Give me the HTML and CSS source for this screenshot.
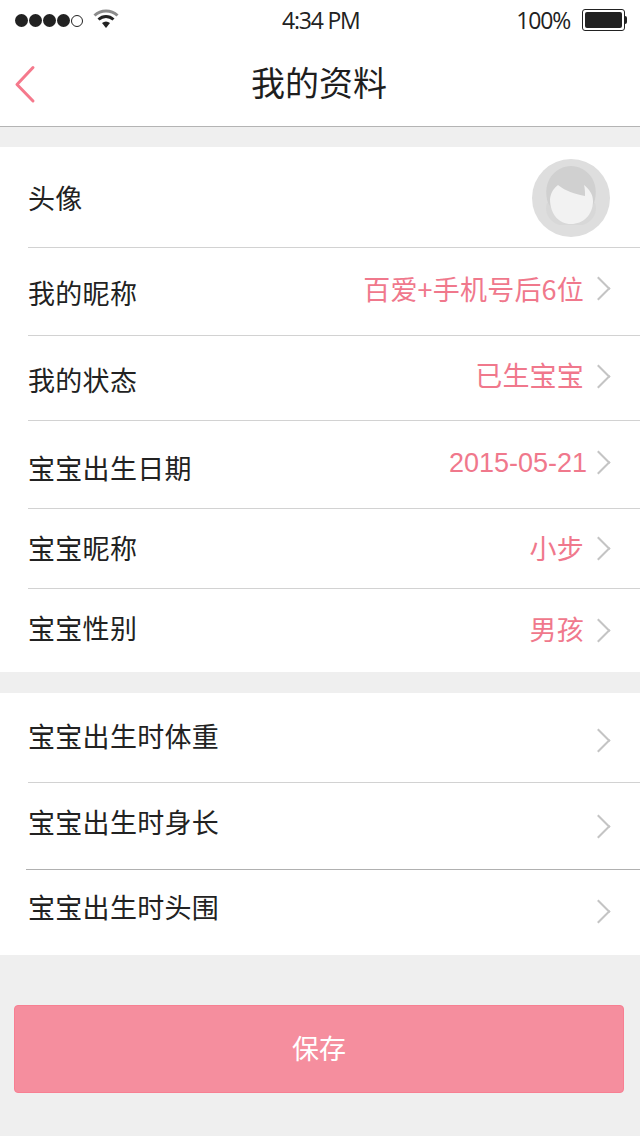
FILE: index.html
```html
<!DOCTYPE html>
<html lang="zh-CN">

<head>
    <meta charset="UTF-8">
    <meta name="viewport" content="width=device-width, initial-scale=1.0">

    <title>我的资料</title>
    <link rel="stylesheet" href="styles.css">
</head>

<body>
    <div class="status-bar">
        <div class="status-left">
            <div class="signal">
                <span class="dot"></span>
                <span class="dot"></span>
                <span class="dot"></span>
                <span class="dot"></span>
                <span class="dot dot-empty"></span>
            </div>
            <svg class="wifi" width="26" height="22" viewBox="0 0 26 22">
                <path d="M1.5 7.5 C8 1.500 18 1.500 24.500 7.500" fill="none" stroke="#8c8c8c" stroke-width="3"/>
                <path d="M5.500 11.500 C10 7.500 16 7.500 20.500 11.500" fill="none" stroke="#222" stroke-width="3"/>
                <path d="M9 15 C11.500 13 14.500 13 17 15 L13 20 Z" fill="#222"/>
            </svg>
        </div>
        <div class="status-time">4:34 PM</div>
        <div class="status-right">
            <span>100%</span>
            <div class="battery"><div class="battery-fill"></div></div>
            <div class="battery-tip"></div>
        </div>
    </div>

    <div class="nav-bar">
        <svg class="back" width="24" height="40" viewBox="0 0 24 40">
            <path d="M20 3.500 L4 20.500 L20 37" fill="none" stroke="#f5798c" stroke-width="3" stroke-linecap="round" stroke-linejoin="round"/>
        </svg>
        <h1 class="nav-title">我的资料</h1>
    </div>

    <div class="group group-first">
        <div class="row row-avatar">
            <span class="label">头像</span>
            <svg class="avatar" width="78" height="78" viewBox="0 0 78 78">
                <circle cx="39" cy="39" r="39" fill="#dedede"/>
                <path d="M15 44 C12 52 16 62 27 66 L51 66 C62 62 66 52 63 44 Z" fill="#d8d8d8"/>
                <path d="M16 44 C9 22 24 7 39 7 C54 7 69 22 62 44 L58 50 L20 50 Z" fill="#d0d0d0"/>
                <path d="M18 40 C19 33 22 29 26 26 C33 32 43 35 53 37 C53 33 53 30 52 26 C57 30 61 35 61 42 C61 56 51 65 39 65 C27 65 18 55 18 40 Z" fill="#f2f2f2"/>
            </svg>
        </div>
        <div class="row row-nick">
            <span class="label">我的昵称</span>
            <span class="value">百爱+手机号后6位</span>
            <span class="arrow"></span>
        </div>
        <div class="row row-state">
            <span class="label">我的状态</span>
            <span class="value">已生宝宝</span>
            <span class="arrow"></span>
        </div>
        <div class="row row-date">
            <span class="label">宝宝出生日期</span>
            <span class="value value-date">2015-05-21</span>
            <span class="arrow"></span>
        </div>
        <div class="row row-baby">
            <span class="label">宝宝昵称</span>
            <span class="value">小步</span>
            <span class="arrow"></span>
        </div>
        <div class="row row-sex">
            <span class="label">宝宝性别</span>
            <span class="value">男孩</span>
            <span class="arrow"></span>
        </div>
    </div>

    <div class="group group-second">
        <div class="row row-weight">
            <span class="label">宝宝出生时体重</span>
            <span class="arrow"></span>
        </div>
        <div class="row row-height">
            <span class="label">宝宝出生时身长</span>
            <span class="arrow"></span>
        </div>
        <div class="row row-head">
            <span class="label">宝宝出生时头围</span>
            <span class="arrow"></span>
        </div>
    </div>

    <div class="save-wrap">
        <button class="save-btn">保存</button>
    </div>
</body>

</html>
```
FILE: styles.css
```css
html,
body {
    margin: 0;
    padding: 0;
}

body {
    width: 640px;
    height: 1136px;
    overflow: hidden;
    background-color: #efefef;
    font-family: "Noto Sans CJK SC", "Liberation Sans", sans-serif;
    color: #222;
}

.status-bar {
    height: 40px;
    background-color: #fff;
    display: flex;
    align-items: center;
    justify-content: space-between;
    padding: 0 13px 0 15px;
    position: relative;
    font-family: "Open Sans", sans-serif;
    font-size: 23px;
    letter-spacing: -1.2px;
}

.status-left,
.status-right {
    display: flex;
    align-items: center;
}

.signal {
    display: flex;
    gap: 1px;
}

.dot {
    width: 13px;
    height: 13px;
    border-radius: 50%;
    background-color: #222;
}

.dot-empty {
    box-sizing: border-box;
    background-color: #fff;
    border: 1px solid #222;
    width: 12px;
    height: 12px;
    margin-top: 1px;
}

.wifi {
    margin-left: 10px;
    margin-top: -2px;
}

.status-time {
    position: absolute;
    left: 282px;
    top: 5px;
    line-height: 30px;
}

.status-right span {
    margin-right: 12px;
}

.battery {
    box-sizing: border-box;
    width: 43px;
    height: 22px;
    border: 1px solid #222;
    border-radius: 3px;
    padding: 2px;
}

.battery-fill {
    height: 100%;
    background-color: #222;
    border-radius: 2px;
}

.battery-tip {
    width: 2px;
    height: 8px;
    background-color: #222;
    border-radius: 0 2px 2px 0;
}

.nav-bar {
    height: 86px;
    background-color: #fff;
    border-bottom: 1px solid #b4b4b4;
    display: flex;
    align-items: center;
    justify-content: center;
    position: relative;
}

.back {
    position: absolute;
    left: 13px;
    top: 24px;
}

.nav-title {
    margin: 0 2px 4px 0;
    font-size: 34px;
    font-weight: 400;
    color: #1e1e1e;
}

.group {
    background-color: #fff;
    padding-left: 28px;
}

.group-first {
    margin-top: 20px;
}

.group-second {
    margin-top: 21px;
}

.row {
    display: flex;
    align-items: center;
    border-bottom: 1px solid #d2d2d2;
    position: relative;
    box-sizing: border-box;
}

.row:last-child {
    border-bottom: none;
}

.row-avatar { height: 101px; }
.row-nick { height: 88px; }
.row-state { height: 85px; }
.row-date { height: 88px; }
.row-baby { height: 80px; }
.row-sex { height: 83px; }
.row-weight { height: 90px; }
.row-height { height: 87px; }
.row-head { height: 85px; }

.row-height {
    border-bottom-color: #b0b0b0;
    margin-left: -2px;
    padding-left: 2px;
}

.label {
    flex: 1;
    font-size: 27px;
    line-height: 40px;
    letter-spacing: 0.3px;
    color: #222;
}

.value {
    font-size: 27px;
    line-height: 40px;
    letter-spacing: 0.2px;
    color: #f0788c;
    margin-right: 6px;
}

.value-date {
    font-family: "Liberation Sans", sans-serif;
    letter-spacing: 0;
    margin-right: 3px;
}

.arrow {
    width: 17px;
    height: 17px;
    box-sizing: border-box;
    border-top: 2px solid #c4c4c4;
    border-right: 2px solid #c4c4c4;
    transform: rotate(45deg);
    margin-right: 33px;
}

/* text in the rows is not quite centred */
.row-avatar .label { margin-top: 1px; }
.row-nick .label { margin-top: 2px; }
.row-nick .value { margin-top: -5px; }
.row-nick .arrow { margin-top: -7px; }
.row-state .label { margin-top: 4px; }
.row-state .value { margin-top: -6px; }
.row-state .arrow { margin-top: -4px; }
.row-date .label { margin-top: 6px; }
.row-date .value { margin-top: -3px; }
.row-date .arrow { margin-top: -4px; }
.row-baby .label { margin-top: -2px; }
.row-baby .value { margin-top: -2px; }
.row-sex .label { margin-top: -5px; }
.row-sex .value { margin-top: -4px; }
.row-sex .arrow { margin-top: -1px; }
.row-weight .label { margin-top: -3px; }
.row-weight .arrow { margin-top: 5px; }
.row-height .label { margin-top: -8px; }
.row-height .arrow { margin-top: 1px; }
.row-head .label { margin-top: -12px; }
.row-head .arrow { margin-top: -2px; }

.avatar {
    margin-right: 30px;
    margin-top: 2px;
}

.save-wrap {
    padding: 50px 16px 0 14px;
}

.save-btn {
    display: block;
    width: 100%;
    height: 88px;
    box-sizing: border-box;
    background-color: #f58e9e;
    border: 1px solid #f87f92;
    border-radius: 4px;
    color: #fff;
    font-family: inherit;
    font-size: 27px;
    padding-bottom: 4px;
}
```
